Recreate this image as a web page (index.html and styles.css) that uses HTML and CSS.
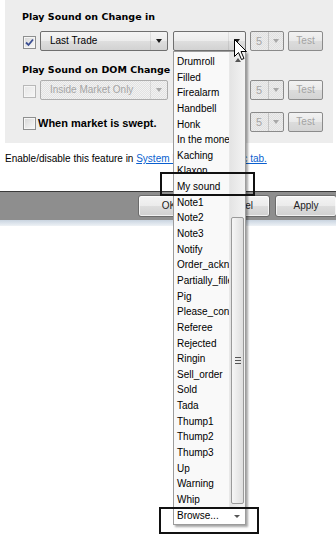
FILE: index.html
```html
<!DOCTYPE html>
<html>
<head>
<meta charset="utf-8">
<link rel="stylesheet" href="styles.css">
</head>
<body>
<div class="panel">
  <div class="title">Play Sound on Change in</div>
  <div class="row row1">
    <span class="check checked"><svg width="9" height="9" viewBox="0 0 9 9"><path d="M1 4.5 L3.5 7 L8 1.5" fill="none" stroke="#3b4f93" stroke-width="1.8"/></svg></span>
    <div class="combo main"><span class="combo-text">Last Trade</span><span class="combo-arrow"><i class="tri"></i></span></div>
    <div class="combo sound"><span class="combo-text"></span><span class="combo-arrow"><i class="tri"></i></span></div>
    <div class="spin"><span class="spin-val">5</span><span class="spin-arrow"><i class="tri gray"></i></span></div>
    <div class="test">Test</div>
  </div>
  <div class="title title2">Play Sound on DOM Change</div>
  <div class="row">
    <span class="check disabled"></span>
    <div class="combo main off"><span class="combo-text">Inside Market Only</span><span class="combo-arrow"><i class="tri gray"></i></span></div>
    <div class="combo sound off"><span class="combo-text"></span><span class="combo-arrow"><i class="tri gray"></i></span></div>
    <div class="spin"><span class="spin-val">5</span><span class="spin-arrow"><i class="tri gray"></i></span></div>
    <div class="test">Test</div>
  </div>
  <div class="row row3">
    <span class="check"></span>
    <span class="swept">When market is swept.</span>
    <div class="spin"><span class="spin-val">5</span><span class="spin-arrow"><i class="tri gray"></i></span></div>
    <div class="test">Test</div>
  </div>
</div>
<div class="note">Enable/disable this feature in <a class="link">System Properties, Logic tab.</a></div>
<div class="toolbar">
  <div class="btn">OK</div>
  <div class="btn cancel">Cancel</div>
  <div class="btn apply">Apply</div>
</div>
<div class="strip"></div>

<div class="dropdown">
  <div class="dd-main">
    <ul class="items">
      <li>Drumroll</li><li>Filled</li><li>Firealarm</li><li>Handbell</li><li>Honk</li>
      <li>In the money</li><li>Kaching</li><li>Klaxon</li><li>My sound</li><li>Note1</li>
      <li>Note2</li><li>Note3</li><li>Notify</li><li>Order_acknowledged</li><li>Partially_filled</li>
      <li>Pig</li><li>Please_confirm</li><li>Referee</li><li>Rejected</li><li>Ringin</li>
      <li>Sell_order</li><li>Sold</li><li>Tada</li><li>Thump1</li><li>Thump2</li>
      <li>Thump3</li><li>Up</li><li>Warning</li><li>Whip</li>
    </ul>
    <div class="sb">
      <div class="sb-up"><i class="tri up"></i></div>
      <div class="sb-track"></div>
      <div class="sb-thumb"><span class="grip"></span></div>
    </div>
  </div>
  <div class="browse"><span class="browse-text">Browse...</span><span class="browse-arrow"><i class="tri small"></i></span></div>
</div>

<div class="mark mark1"></div>
<div class="mark mark2"></div>

<svg class="cursor" width="14" height="23" viewBox="0 0 14 23"><path d="M0.5 0.5 L0.5 17.5 L4.5 13.5 L7.5 20.5 L10 19.5 L7 12.5 L12.5 12.5 Z" fill="#fff" stroke="#000" stroke-width="1" stroke-linejoin="round"/></svg>
</body>
</html>
```
FILE: styles.css
```css
* { box-sizing: border-box; margin: 0; padding: 0; }
html, body { background: #fff; }
body {
  width: 336px;
  height: 545px;
  overflow: hidden;
  position: relative;
  font-family: "Liberation Sans", Arial, sans-serif;
  font-size: 10px;
  color: #000;
}

.panel {
  margin-left: 5px;
  width: 328px;
  height: 143px;
  background: #ededed;
  padding: 7px 0 0 17px;
}
.title {
  font-family: "DejaVu Sans", sans-serif;
  font-weight: bold;
  font-size: 9.5px;
  line-height: 20px;
  height: 20px;
  white-space: nowrap;
}
.title2 { margin-top: 9px; }
.row { display: flex; align-items: center; height: 20px; }
.row1 { margin-top: 4px; }
.row3 { margin-top: 12px; }

.check {
  width: 13px;
  height: 13px;
  margin-left: 1px;
  margin-top: 3px;
  flex: none;
  border: 1px solid #8e8f8f;
  background: linear-gradient(135deg, #d6d6d6, #fafafa);
  box-shadow: inset 0 0 0 1px #f6f6f6;
  display: flex;
  align-items: center;
  justify-content: center;
}
.check.disabled { border-color: #b8b8b8; background: linear-gradient(135deg, #e6e6e6, #f7f7f7); }

.combo {
  height: 20px;
  border: 1px solid #6f6f6f;
  border-radius: 2px;
  background: linear-gradient(#f4f4f4 0%, #ececec 50%, #dedede 51%, #d2d2d2 100%);
  display: flex;
  align-items: center;
  flex: none;
}
.combo.main { width: 128px; margin-left: 4px; }
.combo.sound { width: 73px; margin-left: 5px; }
.combo-text { flex: 1; padding-left: 9px; line-height: 18px; white-space: nowrap; overflow: hidden; }
.combo-arrow {
  width: 17px;
  height: 100%;
  border-left: 1px solid rgba(0,0,0,0.08);
  display: flex;
  align-items: center;
  justify-content: center;
}
.combo.off {
  border-color: #adadad;
  background: repeating-conic-gradient(#e2e2e2 0 25%, #f2f2f2 0 50%) 0 0 / 2px 2px;
  color: #a4a4a4;
}

.tri {
  display: block;
  width: 0;
  height: 0;
  border-left: 3.5px solid transparent;
  border-right: 3.5px solid transparent;
  border-top: 4px solid #1a1a1a;
}
.tri.gray { border-top-color: #a8a8a8; }
.tri.small { border-left-width: 3px; border-right-width: 3px; border-top: 3px solid #555; }
.tri.up { border-top: 0; border-bottom: 4px solid #555; }

.spin {
  width: 34px;
  height: 20px;
  margin-left: 4px;
  flex: none;
  border: 1px solid #8a8a8a;
  border-radius: 2px;
  background: repeating-conic-gradient(#e0e0e0 0 25%, #ececec 0 50%) 0 0 / 2px 2px;
  display: flex;
  align-items: center;
}
.spin-val { flex: 1; padding-left: 5px; font-size: 11px; color: #a6a6a6; line-height: 18px; }
.spin-arrow {
  width: 15px;
  height: 100%;
  border-left: 1px solid #c4c4c4;
  display: flex;
  align-items: center;
  justify-content: center;
}

.test {
  width: 35px;
  height: 20px;
  margin-left: 4px;
  flex: none;
  border: 1px solid #8b8b8b;
  border-radius: 2px;
  background: linear-gradient(#f2f2f2 0%, #e9e9e9 50%, #dcdcdc 51%, #d4d4d4 100%);
  color: #a3a3a3;
  text-align: center;
  line-height: 18px;
  font-size: 10px;
}

.swept {
  width: 208px;
  margin-left: 2px;
  margin-top: 1px;
  flex: none;
  font-weight: bold;
  font-size: 11px;
  white-space: nowrap;
}

.note {
  margin-top: 9px;
  line-height: 14px;
  padding-left: 5px;
  white-space: nowrap;
}
.link { color: #0a5fcf; text-decoration: underline; }

.toolbar {
  margin-top: 25px;
  border-top: 1px solid #3a3a3a;
  background: #8e8e8e;
  height: 29px;
  padding-top: 3px;
  display: flex;
  justify-content: flex-end;
}
.btn {
  width: 62px;
  height: 22px;
  border: 1px solid #6b6b6b;
  border-radius: 3px;
  background: linear-gradient(#f4f4f4 0%, #ebebeb 50%, #dddddd 51%, #d0d0d0 100%);
  box-shadow: inset 0 0 0 1px rgba(255,255,255,0.7);
  text-align: center;
  line-height: 20px;
  font-size: 10px;
  color: #222;
}
.btn.cancel { width: 65px; margin-left: 5px; }
.btn.apply { margin-left: 5px; margin-right: -1px; }
.strip { height: 6px; background: linear-gradient(#c9d4e0, #eef2f6); }

.dropdown {
  position: absolute;
  left: 173px;
  top: 51px;
  width: 73px;
  height: 474px;
  border: 1px solid #9c9c9c;
  background: #f9f9f9;
  box-shadow: 2px 2px 2px rgba(0,0,0,0.35);
  display: flex;
  flex-direction: column;
}
.dd-main { display: flex; height: 456px; }
.items {
  list-style: none;
  flex: 1;
  min-width: 0;
  overflow: hidden;
  padding-top: 2px;
}
.items li {
  line-height: 15.65px;
  height: 15.65px;
  padding-left: 3px;
  white-space: nowrap;
  overflow: hidden;
  font-size: 10px;
}
.sb {
  width: 16px;
  display: flex;
  flex-direction: column;
  background: linear-gradient(to right, #e4e4e4, #f3f3f3);
  border-left: 1px solid #e8e8e8;
}
.sb-up { height: 16px; display: flex; align-items: center; justify-content: center; }
.sb-track { height: 149px; }
.sb-thumb {
  height: 287px;
  margin: 0 1px;
  border: 1px solid #9a9a9a;
  border-radius: 2px;
  background: linear-gradient(to right, #f6f6f6, #dedede);
  display: flex;
  align-items: center;
  justify-content: center;
}
.grip {
  display: block;
  width: 6px;
  height: 7px;
  background: repeating-linear-gradient(#555 0 1px, transparent 1px 3px);
}
.browse {
  display: flex;
  height: 16px;
  background: #fff;
  align-items: center;
}
.browse-text { flex: 1; padding-left: 3px; line-height: 16px; }
.browse-arrow { width: 16px; display: flex; justify-content: center; }

.mark {
  position: absolute;
  border: 2px solid #111;
}
.mark1 { left: 160px; top: 172px; width: 95px; height: 24px; }
.mark2 { left: 159px; top: 507px; width: 100px; height: 27px; }

.cursor { position: absolute; left: 234px; top: 39px; }
```
